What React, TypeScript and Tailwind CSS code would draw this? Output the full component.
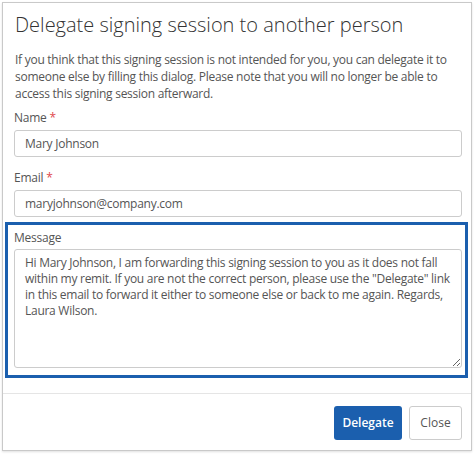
const font = { fontFamily: '"Open Sans", "Noto Sans", sans-serif' };

function Field({ label, value }: { label: string; value: string }) {
  return (
    <div>
      <label className="block text-[12px] leading-[17px] tracking-[-0.25px] text-[#555]">
        {label} <span className="text-[#e0474c]">*</span>
      </label>
      <input
        readOnly
        value={value}
        className="mt-[4px] block h-[27px] w-full rounded-[3px] border border-[#cccccc] bg-white px-[10px] text-[12px] tracking-[-0.25px] text-[#555] outline-none"
      />
    </div>
  );
}

export default function App() {
  const message =
    'Hi Mary Johnson, I am forwarding this signing session to you as it does not fall within my remit. If you are not the correct person, please use the "Delegate" link in this email to forward it either to someone else or back to me again. Regards, Laura Wilson.';

  return (
    <div className="h-[454px] w-[475px] bg-white p-[2px]" style={font}>
      <div className="flex h-[449px] w-[470px] flex-col border border-[#c9c9c9] bg-white shadow-[0_1px_2px_rgba(0,0,0,0.12)]">
        <div className="pb-[15px] pl-[11px] pr-[9px] pt-[8px]">
          <h1 className="pl-[1px] text-[20px] font-light leading-[27px] text-[#333]">
            Delegate signing session to another person
          </h1>
          <p className="mt-[13px] pl-[1px] text-[12px] leading-[17px] tracking-[-0.27px] text-[#555]">
            If you think that this signing session is not intended for you, you
            can delegate it to someone else by filling this dialog. Please note
            that you will no longer be able to access this signing session
            afterward.
          </p>

          <div className="mt-[7px]">
            <Field label="Name" value="Mary Johnson" />
          </div>
          <div className="mt-[12px]">
            <Field label="Email" value="maryjohnson@company.com" />
          </div>

          <div className="-ml-[9px] -mr-[6px] mt-[5px] border-[3px] border-[#1b5fae] pb-[7px] pl-[6px] pr-[3px] pt-[4px]">
            <label className="block text-[12px] leading-[17px] tracking-[-0.25px] text-[#555]">
              Message
            </label>
            <textarea
              readOnly
              value={message}
              className="mt-[3px] block h-[119px] w-full rounded-[3px] border border-[#cccccc] bg-white px-[10px] pt-[5px] text-[12px] leading-[16px] tracking-[-0.27px] text-[#555] outline-none"
            />
          </div>
        </div>

        <div className="flex justify-end gap-[7px] border-t border-[#e5e5e5] pb-[10px] pr-[9px] pt-[12px]">
          <button className="h-[34px] w-[68px] rounded-[3px] bg-[#1b5fae] text-[12px] font-semibold text-white">
            Delegate
          </button>
          <button className="h-[34px] w-[53px] rounded-[3px] border border-[#cccccc] bg-white text-[12px] text-[#555]">
            Close
          </button>
        </div>
      </div>
    </div>
  );
}
